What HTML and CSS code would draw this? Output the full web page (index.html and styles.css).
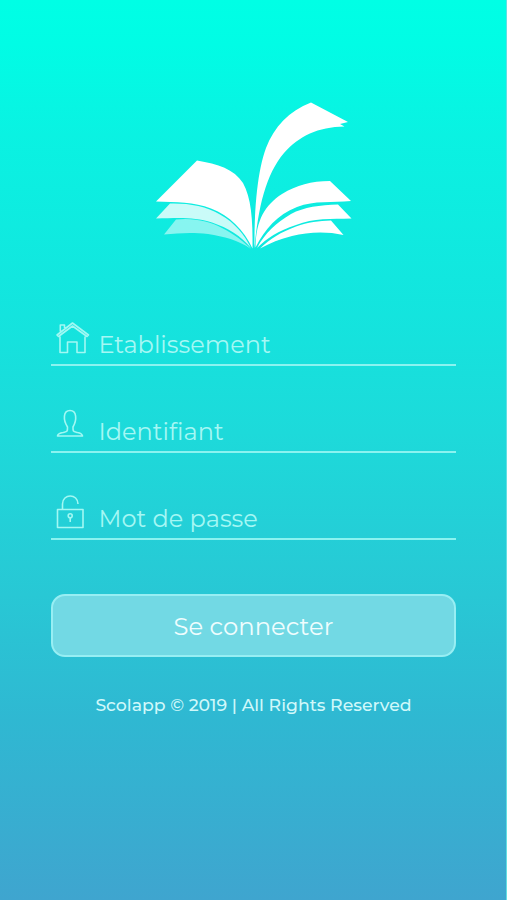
FILE: index.html
```html
<!DOCTYPE html>
<html lang="fr">
<head>
<meta charset="utf-8">
<title>Scolapp</title>
<link rel="stylesheet" href="styles.css">
</head>
<body>
<main class="login">
  <svg class="logo" viewBox="151 98 206 154" aria-hidden="true">
    <g fill="#fff">
      <path d="M156 201.500L197 160.500C218 164 234 169 243 183C251 197 253 220 252.500 248.500C244 230 230 216 211 208.500C194 202 176 202 156 201.500Z"/>
      <path opacity=".78" d="M170 203.500C188 203 206 206 220 214.500C235 223 244 234 251 248C241 236 228 228 212 222.500C194 216.500 177 218 156 218.500Z"/>
      <path opacity=".5" d="M176 219.500C194 217.500 210 221.500 222 228C234 234 243 241 251 249C238 240 224 236.500 208 234C192 232 179 233 164 234.500Z"/>
      <path d="M254.500 248.500C254 207 258 169 266 148C274 127 289 111 311 102.500L348 122L340 124L344.500 126.500C318 127 299 136 284 153C266 174 258 208 254.500 248.500Z"/>
      <path d="M255.500 247.500C256 220 265 205 282 194C297 185 311 181 330 181L351 201C332 203 315 200 297 207C277 215 265 229 255.500 247.500Z"/>
      <path d="M257 248C265 233 276 223 291 214C304 207 320 205 338 204.500L351.500 218.500C331 219 314 218 296 225C278 231 267 238 257 248Z"/>
      <path d="M260 248.500C270 239 281 232 296 226.500C308 222 319 221 331 220.500L343.500 235C326 231 308 232 292 236C280 239 270 243 260 248.500Z"/>
    </g>
  </svg>
  <form class="form">
    <label class="field">
      <svg class="icon" viewBox="0 0 36 38" aria-hidden="true">
        <path d="M7.500 15.500L6 14L21.500 2L37.500 14L36 15.500L21.500 5L7.500 15.500ZM9 15.500V31.500H16.500V21H26V31.500H34V15.500M9.300 10.500V4H13.500V7"/>
      </svg>
      <span class="label">Etablissement</span>
    </label>
    <label class="field">
      <svg class="icon" viewBox="0 0 36 38" aria-hidden="true">
        <path d="M16.500 19C12 12 12 2.500 19 2.500S26 12 22 19C21.800 24 22.500 23.500 26.500 24.500C29.500 25 31 25.500 31.500 28H6.500C7 25.500 8.500 25 12 24.500C16 23.500 16.700 24 16.500 19Z"/>
      </svg>
      <span class="label">Identifiant</span>
    </label>
    <label class="field">
      <svg class="icon" viewBox="0 0 36 38" aria-hidden="true">
        <path d="M6.500 14.500H32V32.500H6.500ZM11.500 14.500V9C11.500 -1.700 27 -1.700 27 9M19.200 22.500V27"/>
        <circle cx="19.200" cy="20.700" r="2"/>
      </svg>
      <span class="label">Mot de passe</span>
    </label>
    <button class="submit" type="button">Se connecter</button>
  </form>
  <footer class="footer">Scolapp © 2019 | All Rights Reserved</footer>
</main>
</body>
</html>
```
FILE: styles.css
```css
* { box-sizing: border-box; }
body { margin: 0; font-family: Montserrat, Inter, sans-serif; }
.login {
  display: flex;
  flex-direction: column;
  align-items: center;
  height: 900px;
  padding: 98px 50px 0 51px;
  border-right: 1px solid #62dfe3;
  background: linear-gradient(#00ffe5 0%, #01fce5 5%, #0af2e2 15%, #14e4de 35%, #1ddada 48%, #28c8d5 66%, #2fb8d2 80%, #3fa5cf 100%);
}
.logo { width: 206px; height: 154px; }
.form { display: flex; flex-direction: column; width: 100%; padding-top: 67px; }
.field {
  display: flex;
  align-items: flex-start;
  height: 47px;
  margin-bottom: 40px;
  border-bottom: 2px solid #8af3f0;
}
.icon {
  flex: none;
  width: 36px;
  height: 38px;
  margin-top: 2px;
  overflow: visible;
  fill: none;
  stroke: #a2f8f3;
  stroke-width: 1.6;
  stroke-linejoin: round;
}
.label {
  padding: 10.5px 0 0 11.5px;
  font-size: 24px;
  font-weight: 400;
  font-variant-ligatures: none;
  line-height: 30px;
  white-space: nowrap;
  color: #a5f7f4;
}
.submit {
  height: 63px;
  margin-top: 14px;
  padding: 0;
  border: 2px solid #97eef3;
  border-radius: 14px;
  background: #72d9e4;
  color: #effdfe;
  font: 400 24.3px/30px Montserrat, Inter, sans-serif;
}
.footer {
  padding-top: 37px;
  font-size: 17.3px;
  font-weight: 500;
  line-height: 22px;
  white-space: nowrap;
  color: #d0f8fa;
}
```
